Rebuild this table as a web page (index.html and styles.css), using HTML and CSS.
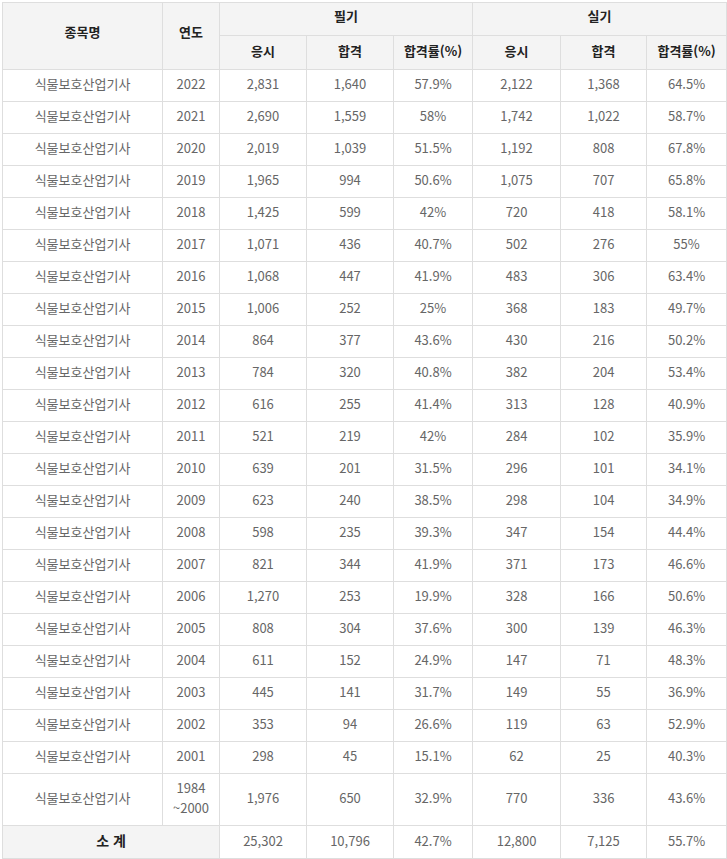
FILE: index.html
```html
<!DOCTYPE html>
<html lang="ko">
<head>
<meta charset="utf-8">
<link rel="stylesheet" href="styles.css">
</head>
<body>
<table class="stats">
<colgroup>
<col class="c-name"><col class="c-year"><col class="c-a"><col class="c-b"><col class="c-c"><col class="c-d"><col class="c-e"><col class="c-f">
</colgroup>
<thead>
<tr class="h1"><th rowspan="2" class="span">종목명</th><th rowspan="2" class="span">연도</th><th colspan="3">필기</th><th colspan="3">실기</th></tr>
<tr class="h2"><th>응시</th><th>합격</th><th>합격률(%)</th><th>응시</th><th>합격</th><th>합격률(%)</th></tr>
</thead>
<tbody>
<tr><td>식물보호산업기사</td><td>2022</td><td>2,831</td><td>1,640</td><td>57.9%</td><td>2,122</td><td>1,368</td><td>64.5%</td></tr>
<tr><td>식물보호산업기사</td><td>2021</td><td>2,690</td><td>1,559</td><td>58%</td><td>1,742</td><td>1,022</td><td>58.7%</td></tr>
<tr><td>식물보호산업기사</td><td>2020</td><td>2,019</td><td>1,039</td><td>51.5%</td><td>1,192</td><td>808</td><td>67.8%</td></tr>
<tr><td>식물보호산업기사</td><td>2019</td><td>1,965</td><td>994</td><td>50.6%</td><td>1,075</td><td>707</td><td>65.8%</td></tr>
<tr><td>식물보호산업기사</td><td>2018</td><td>1,425</td><td>599</td><td>42%</td><td>720</td><td>418</td><td>58.1%</td></tr>
<tr><td>식물보호산업기사</td><td>2017</td><td>1,071</td><td>436</td><td>40.7%</td><td>502</td><td>276</td><td>55%</td></tr>
<tr><td>식물보호산업기사</td><td>2016</td><td>1,068</td><td>447</td><td>41.9%</td><td>483</td><td>306</td><td>63.4%</td></tr>
<tr><td>식물보호산업기사</td><td>2015</td><td>1,006</td><td>252</td><td>25%</td><td>368</td><td>183</td><td>49.7%</td></tr>
<tr><td>식물보호산업기사</td><td>2014</td><td>864</td><td>377</td><td>43.6%</td><td>430</td><td>216</td><td>50.2%</td></tr>
<tr><td>식물보호산업기사</td><td>2013</td><td>784</td><td>320</td><td>40.8%</td><td>382</td><td>204</td><td>53.4%</td></tr>
<tr><td>식물보호산업기사</td><td>2012</td><td>616</td><td>255</td><td>41.4%</td><td>313</td><td>128</td><td>40.9%</td></tr>
<tr><td>식물보호산업기사</td><td>2011</td><td>521</td><td>219</td><td>42%</td><td>284</td><td>102</td><td>35.9%</td></tr>
<tr><td>식물보호산업기사</td><td>2010</td><td>639</td><td>201</td><td>31.5%</td><td>296</td><td>101</td><td>34.1%</td></tr>
<tr><td>식물보호산업기사</td><td>2009</td><td>623</td><td>240</td><td>38.5%</td><td>298</td><td>104</td><td>34.9%</td></tr>
<tr><td>식물보호산업기사</td><td>2008</td><td>598</td><td>235</td><td>39.3%</td><td>347</td><td>154</td><td>44.4%</td></tr>
<tr><td>식물보호산업기사</td><td>2007</td><td>821</td><td>344</td><td>41.9%</td><td>371</td><td>173</td><td>46.6%</td></tr>
<tr><td>식물보호산업기사</td><td>2006</td><td>1,270</td><td>253</td><td>19.9%</td><td>328</td><td>166</td><td>50.6%</td></tr>
<tr><td>식물보호산업기사</td><td>2005</td><td>808</td><td>304</td><td>37.6%</td><td>300</td><td>139</td><td>46.3%</td></tr>
<tr><td>식물보호산업기사</td><td>2004</td><td>611</td><td>152</td><td>24.9%</td><td>147</td><td>71</td><td>48.3%</td></tr>
<tr><td>식물보호산업기사</td><td>2003</td><td>445</td><td>141</td><td>31.7%</td><td>149</td><td>55</td><td>36.9%</td></tr>
<tr><td>식물보호산업기사</td><td>2002</td><td>353</td><td>94</td><td>26.6%</td><td>119</td><td>63</td><td>52.9%</td></tr>
<tr><td>식물보호산업기사</td><td>2001</td><td>298</td><td>45</td><td>15.1%</td><td>62</td><td>25</td><td>40.3%</td></tr>
<tr class="tall"><td>식물보호산업기사</td><td>1984<br>~2000</td><td>1,976</td><td>650</td><td>32.9%</td><td>770</td><td>336</td><td>43.6%</td></tr>
</tbody>
<tfoot>
<tr class="total"><th colspan="2">소 계</th><td>25,302</td><td>10,796</td><td>42.7%</td><td>12,800</td><td>7,125</td><td>55.7%</td></tr>
</tfoot>
</table>
</body>
</html>
```
FILE: styles.css
```css
html, body {
  margin: 0;
  padding: 0;
  background: #fff;
}
body {
  padding: 2px 0 0 2px;
  font-family: "Noto Sans CJK KR", "Noto Sans", sans-serif;
  font-size: 13px;
}
.stats {
  border-collapse: collapse;
  table-layout: fixed;
  width: 725px;
}
.c-name { width: 160px; }
.c-year { width: 57px; }
.c-a { width: 87px; }
.c-b { width: 87px; }
.c-c { width: 79px; }
.c-d { width: 88px; }
.c-e { width: 86px; }
.c-f { width: 80px; }
.stats th,
.stats td {
  border: 1px solid #dedede;
  text-align: center;
  vertical-align: middle;
  padding: 0 0 3px;
  line-height: 20px;
}
.stats th {
  background: #f4f4f4;
  color: #222;
  font-weight: bold;
}
.stats td {
  color: #666;
}
.h1 th { height: 26px; padding-bottom: 6px; }
.h1 th.span { padding-bottom: 8px; }
.h2 th { height: 30px; }
.stats tbody tr { height: 32px; }
.stats tbody tr.tall { height: 52px; }
.total { height: 33px; }
.total th { font-size: 14px; padding-bottom: 5px; }
```
